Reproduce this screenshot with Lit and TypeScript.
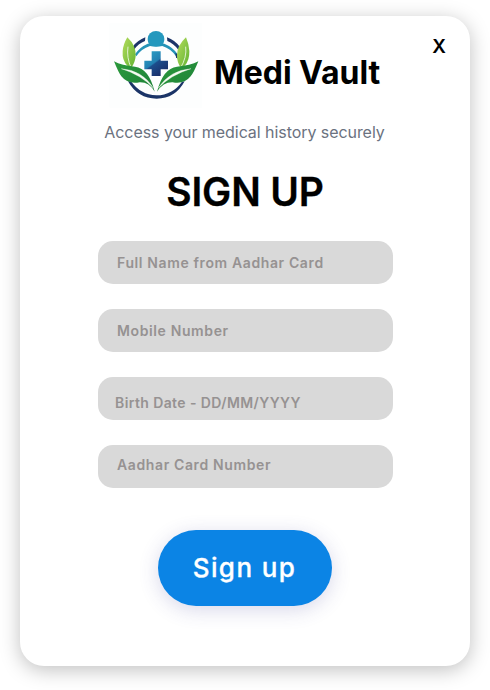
import { LitElement, html, css } from "lit";
import { customElement } from "lit/decorators.js";

const logo = html`<svg class="logo" viewBox="0 0 330 270" role="img" aria-label="Medi Vault logo">
  <defs>
    <linearGradient id="leafLight" x1="0" y1="0" x2="1" y2="1">
      <stop offset="0" stop-color="#b4dc5c"></stop><stop offset="1" stop-color="#62b332"></stop>
    </linearGradient>
    <linearGradient id="leafDark" x1="0" y1="0" x2="1" y2="1">
      <stop offset="0" stop-color="#2c9a3c"></stop><stop offset="1" stop-color="#1c8038"></stop>
    </linearGradient>
    <linearGradient id="plus" x1="0" y1="0" x2="0.7" y2="1">
      <stop offset="0" stop-color="#2da5c8"></stop><stop offset="0.5" stop-color="#2380b2"></stop><stop offset="0.55" stop-color="#1c4d8c"></stop><stop offset="1" stop-color="#192d68"></stop>
    </linearGradient>
  </defs>
  <rect x="28" y="10" width="278" height="253" fill="#fdfefe"></rect>
  <path d="M98 80Q113 61 136 52L135 63Q116 70 102 89Z" fill="#1c3468"></path>
  <path d="M201 52Q225 61 240 81L235 89Q221 71 202 63Z" fill="#1c3468"></path>
  <path d="M105 103Q118 82 143 71L193 71Q220 82 233 103L228 109Q213 86 187 78Q168 82 150 78Q124 86 109 109Z" fill="#2593b7"></path>
  <path d="M226 99L233 103V116L228 112Z" fill="#1c3468"></path>
  <path d="M143 57A25 24 0 1 1 193 57Q193 65 190 71Q179 79 168 79Q157 79 146 71Q143 65 143 57Z" fill="#2498bd"></path>
  <path d="M155 94h27v28h22v26h-22v20h-27v-20h-22v-26h22Z" fill="url(#plus)"></path>
  <path d="M84 184Q113 236 170 236Q226 236 254 184L246 185Q218 225 169 226Q122 225 93 184Z" fill="#1b3467"></path>
  <path d="M82 52Q109 77 107 109Q105 129 94 143L82 137Q66 122 68 94Q69 74 82 52Z" fill="url(#leafLight)"></path>
  <path d="M258 52Q231 77 231 105Q231 128 242 142L254 137Q269 121 268 93Q267 73 258 52Z" fill="url(#leafLight)"></path>
  <path d="M84 80Q79 112 94 145M257 80Q261 112 241 145" fill="none" stroke="#f2faed" stroke-width="2.5"></path>
  <path d="M42 124Q65 137 105 140Q147 145 164 215Q147 186 119 187Q84 194 64 169Q55 157 42 124Z" fill="url(#leafDark)"></path>
  <path d="M295 124Q271 137 231 140Q189 145 171 215Q190 186 218 187Q252 194 272 169Q282 157 295 124Z" fill="url(#leafDark)"></path>
  <path d="M64 146Q128 151 160 204Q123 164 64 146ZM273 146Q209 151 175 204Q213 164 273 146Z" fill="#f4faf1" stroke="#f4faf1" stroke-width="1"></path>
</svg>`;

@customElement("app-root")
export class AppRoot extends LitElement {
  static styles = css`
    :host {
      display: block;
      height: 690px;
      padding: 16px 20px 24px;
      box-sizing: border-box;
      background: #fff;
      font-family: Inter, sans-serif;
    }
    .card {
      position: relative;
      display: flex;
      flex-direction: column;
      align-items: center;
      height: 650px;
      border-radius: 24px;
      background: #fff;
      box-shadow: 0 4px 20px rgba(0, 0, 0, 0.25);
    }
    .close {
      position: absolute;
      top: 17px;
      right: 21px;
      width: 20px;
      padding: 0;
      border: 0;
      background: none;
      color: #000;
      font: 600 19px/28px Inter, sans-serif;
      text-align: center;
    }
    .brand {
      display: flex;
      align-items: center;
      align-self: flex-start;
      height: 90px;
      margin: 4px 0 0 80px;
    }
    .logo { width: 110px; height: 90px; flex: none; }
    .name {
      margin: 16px 0 0 4px;
      font: 700 32px/40px Inter, sans-serif;
      letter-spacing: -0.05px;
      color: #000;
      white-space: nowrap;
    }
    .tagline {
      margin: 12px 0 0;
      padding-right: 1px;
      font: 400 16px/20px Inter, sans-serif;
      letter-spacing: -0.06px;
      color: #6b7280;
      white-space: nowrap;
    }
    h1 {
      margin: 26px 0 25px;
      font: 600 39px/48px Inter, sans-serif;
      letter-spacing: -0.2px;
      color: #000;
      -webkit-text-stroke: 0.3px #000;
    }
    .fields { display: flex; flex-direction: column; gap: 25px; }
    .field {
      width: 295px;
      height: 43px;
      box-sizing: border-box;
      padding: 12px 0 0 19.5px;
      border-radius: 15px;
      background: #d9d9d9;
      color: #969292;
      font: 600 14px/20px Inter, sans-serif;
      letter-spacing: 0.62px;
      white-space: nowrap;
    }
    .birth { padding: 16px 0 0 17.5px; letter-spacing: 0.4px; }
    .aadhar { padding-top: 10px; }
    .submit {
      width: 174px;
      height: 76px;
      margin: 42px 1px 0 0;
      padding: 0;
      border: 0;
      border-radius: 38px;
      background: #0b84e5;
      box-shadow: 0 4px 20px rgba(60, 60, 150, 0.2);
      color: #fff;
      font: 500 26px/76px Inter, sans-serif;
      letter-spacing: 1.4px;
      -webkit-text-stroke: 0.3px #fff;
    }
  `;

  render() {
    return html`
      <main class="card">
        <button class="close" aria-label="Close">X</button>
        <div class="brand">${logo}<div class="name">Medi Vault</div></div>
        <p class="tagline">Access your medical history securely</p>
        <h1>SIGN UP</h1>
        <div class="fields">
          <div class="field">Full Name from Aadhar Card</div>
          <div class="field">Mobile Number</div>
          <div class="field birth">Birth Date - DD/MM/YYYY</div>
          <div class="field aadhar">Aadhar Card Number</div>
        </div>
        <button class="submit">Sign up</button>
      </main>
    `;
  }
}
